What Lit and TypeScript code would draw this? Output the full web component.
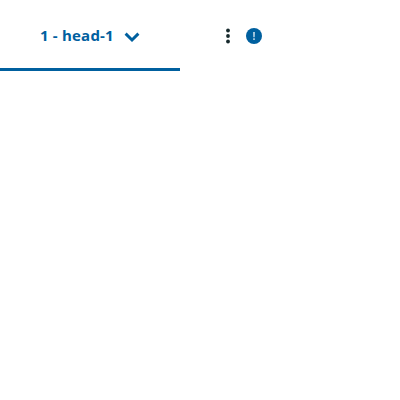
import { LitElement, html, css } from "lit";
import { customElement } from "lit/decorators.js";

@customElement("app-root")
class AppRoot extends LitElement {
  static styles = css`
    :host { display: block; width: 400px; height: 400px; background: #fff; }
    .bar { display: flex; height: 71px; }
    .tab {
      box-sizing: border-box; width: 180px; height: 71px;
      display: flex; align-items: center; gap: 10px;
      padding: 0 0 0 40px; border: 0; border-bottom: 3px solid #00609f;
      background: none; color: #00609f;
      font: 700 15px/20px "Open Sans", "Noto Sans", sans-serif;
      letter-spacing: 0.2px;
    }
    .tab svg { margin-top: 5px; }
    .label { margin-top: 2px; width: 74px; white-space: nowrap; text-align: left; }
    .actions { display: flex; align-items: flex-start; padding: 28px 0 0 45px; gap: 15px; }
    svg { display: block; flex: none; }
  `;
  render() {
    return html`<div class="bar">
      <button class="tab">
        <span class="label">1 - head-1</span>
        <svg width="16" height="16" viewBox="0 0 16 16"><path d="M1.6 4.6 8 11l6.4-6.4" fill="none" stroke="#00609f" stroke-width="2.9"/></svg>
      </button>
      <div class="actions">
        <svg width="6" height="16" viewBox="0 0 6 16" fill="#16292c"><circle cx="3" cy="2.5" r="1.9"/><circle cx="3" cy="8" r="1.9"/><circle cx="3" cy="13.5" r="1.9"/></svg>
        <svg width="16" height="16" viewBox="0 0 16 16"><circle cx="8" cy="8" r="8" fill="#00609f"/><path d="M7.1 4h1.8l-.2 5.2H7.3z" fill="#fff" fill-opacity=".75"/><path d="M7.2 10.3h1.6v1.6H7.2z" fill="#fff" fill-opacity=".75"/></svg>
      </div>
    </div>`;
  }
}
